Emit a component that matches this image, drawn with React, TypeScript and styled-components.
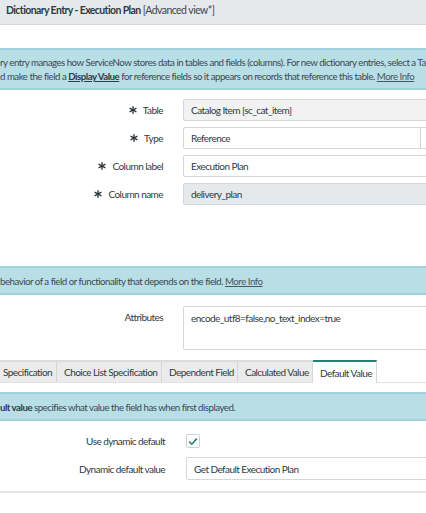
import styled, { createGlobalStyle } from "styled-components";

const GlobalStyle = createGlobalStyle`
    html, body {
        margin: 0;
        padding: 0;
        background: #ffffff;
    }
    body {
        font-family: Lato, "Open Sans", sans-serif;
        font-size: 10px;
        letter-spacing: -0.55px;
        color: #2e3a44;
        overflow: hidden;
    }
`;

const Page = styled.div`
    width: 426px;
    height: 513px;
    overflow: hidden;
    background: #fff;
`;

const Header = styled.header`
    height: 25px;
    background: #e6e9ec;
    border-bottom: 1px solid #d3d7da;
    padding: 4px 0 0 6px;
    box-sizing: border-box;
    font-size: 10.5px;
    white-space: nowrap;
`;

const Title = styled.span`
    font-weight: 700;
    letter-spacing: -0.6px;
`;

const ViewTag = styled.span`
    color: #3a4650;
`;

const InfoBox = styled.div<{ $top: number; $height: number }>`
    margin-top: ${p => p.$top}px;
    height: ${p => p.$height}px;
    box-sizing: border-box;
    background: #b8dfe6;
    border-top: 2px solid #a2d2dc;
    border-bottom: 2px solid #a2d2dc;
    color: #3b4752;
    font-size: 9.7px;
    letter-spacing: -0.5px;
    white-space: nowrap;
    overflow: hidden;
    display: flex;
    flex-direction: column;
    justify-content: center;
    gap: 2px;
`;

const InfoLine = styled.div`
    line-height: 12px;
`;

const Strong = styled.strong`
    font-weight: 700;
    color: #2e3a44;
`;

const UnderStrong = styled(Strong)`
    text-decoration: underline;
`;

const MoreInfo = styled.span`
    text-decoration: underline;
    color: #4a5661;
`;

const Form = styled.div<{ $top: number; $gap: number }>`
    margin-top: ${p => p.$top}px;
    display: flex;
    flex-direction: column;
    gap: ${p => p.$gap}px;
`;

const Row = styled.div<{ $label: number }>`
    display: grid;
    grid-template-columns: ${p => p.$label}px 1fr;
    align-items: start;
`;

const Label = styled.div<{ $pad: number; $h: number }>`
    display: flex;
    align-items: center;
    justify-content: flex-end;
    gap: 6px;
    padding-right: ${p => p.$pad}px;
    height: ${p => p.$h}px;
    color: #2e3a44;
    white-space: nowrap;
`;

const Field = styled.div<{ $bg?: string; $h?: number }>`
    height: ${p => p.$h ?? 22}px;
    box-sizing: border-box;
    margin-right: -20px;
    background: ${p => p.$bg ?? "#ffffff"};
    border: 1px solid #d4d7da;
    border-radius: 2px;
    padding: 0 7px;
    display: flex;
    align-items: center;
    color: #2e3a44;
    white-space: nowrap;
`;

const TextArea = styled(Field)`
    align-items: flex-start;
    padding-top: 5px;
`;

const SplitField = styled.div`
    display: flex;
    height: 22px;
    margin-right: -20px;
`;

const SplitMain = styled(Field)`
    flex: 1;
    margin-right: 0;
    border-radius: 2px 0 0 2px;
`;

const SplitButton = styled.div`
    width: 25px;
    box-sizing: border-box;
    border: 1px solid #d4d7da;
    border-left: none;
    background: #fff;
`;

const Check = styled.div`
    width: 14px;
    height: 14px;
    box-sizing: border-box;
    border: 1px solid #cfd3d6;
    border-radius: 2px;
    display: flex;
    align-items: center;
    justify-content: center;
    background: #fff;
`;

const Tabs = styled.div`
    margin-top: 10px;
    height: 22px;
    display: flex;
    border-bottom: 1px solid #e2e2e2;
`;

const Tab = styled.div<{ $active?: boolean; $w: number; $pl?: number }>`
    width: ${p => p.$w}px;
    box-sizing: border-box;
    padding-left: ${p => p.$pl ?? 7}px;
    display: flex;
    align-items: center;
    white-space: nowrap;
    color: #2e3a44;
    background: ${p => (p.$active ? "#ffffff" : "#ebebeb")};
    border-top: 2px solid ${p => (p.$active ? "#1f8476" : "#dcdcdc")};
    border-right: 1px solid #d6d6d6;
    margin-bottom: ${p => (p.$active ? "-1px" : "0")};
`;

const Footer = styled.div`
    margin-top: 11px;
    border-top: 2px solid #e3e3e3;
`;

const Asterisk = () => (
    <svg width="8" height="8" viewBox="0 0 10 10">
        <g stroke="#2e3a44" strokeWidth="1.7" strokeLinecap="round">
            <line x1="5" y1="0.8" x2="5" y2="9.2" />
            <line x1="1.3" y1="2.9" x2="8.7" y2="7.1" />
            <line x1="1.3" y1="7.1" x2="8.7" y2="2.9" />
        </g>
    </svg>
);

const CheckMark = () => (
    <svg width="10" height="9" viewBox="0 0 10 9">
        <path d="M1.2 4.6 L3.8 7.2 L8.8 1.6" fill="none" stroke="#1f8476" strokeWidth="1.6" />
    </svg>
);

const fields = [
    { label: "Table", value: "Catalog Item [sc_cat_item]", bg: "#f2f2f2" },
    { label: "Type", value: "Reference", split: true },
    { label: "Column label", value: "Execution Plan" },
    { label: "Column name", value: "delivery_plan", bg: "#e6e9eb" },
];

const App = () => {
    return (
        <Page>
            <GlobalStyle />
            <Header>
                <Title>Dictionary Entry - Execution Plan</Title> <ViewTag>[Advanced view*]</ViewTag>
            </Header>

            <InfoBox $top={23} $height={42}>
                <InfoLine>
                    ry entry manages how ServiceNow stores data in tables and fields (columns). For new dictionary entries, select a Table
                </InfoLine>
                <InfoLine>
                    d make the field a <UnderStrong>Display Value</UnderStrong> for reference fields so it appears on records that reference this table. <MoreInfo>More Info</MoreInfo>
                </InfoLine>
            </InfoBox>

            <Form $top={9} $gap={6}>
                {fields.map(f => (
                    <Row key={f.label} $label={183}>
                        <Label $pad={20} $h={22}>
                            <Asterisk />
                            {f.label}
                        </Label>
                        {f.split ? (
                            <SplitField>
                                <SplitMain>{f.value}</SplitMain>
                                <SplitButton />
                            </SplitField>
                        ) : (
                            <Field $bg={f.bg}>{f.value}</Field>
                        )}
                    </Row>
                ))}
            </Form>

            <InfoBox $top={61} $height={29}>
                <InfoLine>
                    behavior of a field or functionality that depends on the field. <MoreInfo>More Info</MoreInfo>
                </InfoLine>
            </InfoBox>

            <Form $top={11} $gap={0}>
                <Row $label={183}>
                    <Label $pad={20} $h={22}>Attributes</Label>
                    <TextArea $h={44}>encode_utf8=false,no_text_index=true</TextArea>
                </Row>
            </Form>

            <Tabs>
                <Tab $w={57} $pl={3}>Specification</Tab>
                <Tab $w={105}>Choice List Specification</Tab>
                <Tab $w={76}>Dependent Field</Tab>
                <Tab $w={75}>Calculated Value</Tab>
                <Tab $w={64} $active>Default Value</Tab>
            </Tabs>

            <InfoBox $top={9} $height={29}>
                <InfoLine>
                    <Strong>ult value</Strong> specifies what value the field has when first displayed.
                </InfoLine>
            </InfoBox>

            <Form $top={13} $gap={9}>
                <Row $label={186}>
                    <Label $pad={21} $h={14}>Use dynamic default</Label>
                    <Check>
                        <CheckMark />
                    </Check>
                </Row>
                <Row $label={186}>
                    <Label $pad={21} $h={23}>Dynamic default value</Label>
                    <Field $h={23}>Get Default Execution Plan</Field>
                </Row>
            </Form>

            <Footer />
        </Page>
    );
};

export default App;
